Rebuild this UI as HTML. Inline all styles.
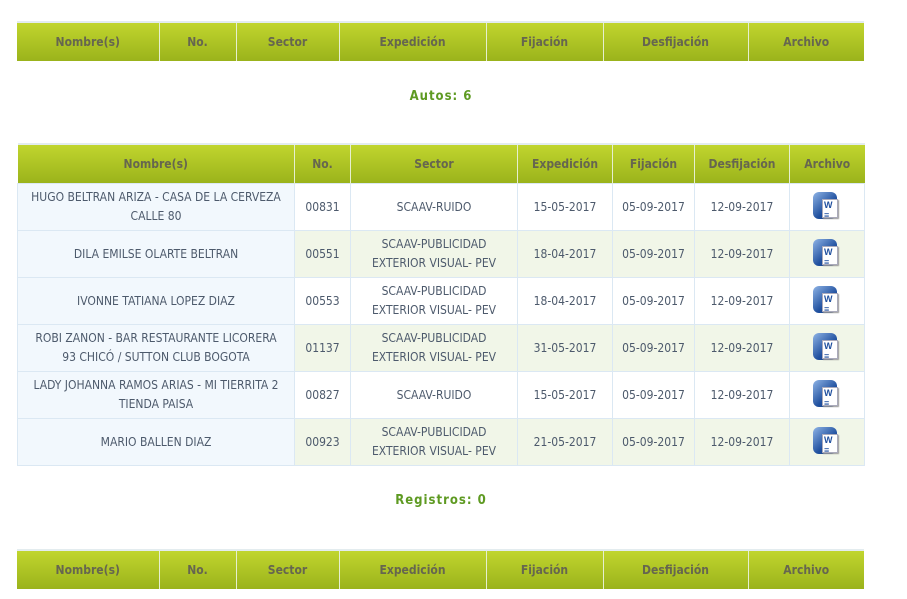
<!DOCTYPE html>
<html><head><meta charset="utf-8"><style>
body{margin:0;background:#fff;width:907px;height:599px;overflow:hidden;font-family:"DejaVu Sans Condensed","Liberation Sans",sans-serif;}
table{position:absolute;left:17px;width:847px;border-collapse:collapse;table-layout:fixed;}
th{height:38px;padding:0;background:linear-gradient(#c1d52e,#9bb31b);color:#66664f;font-size:12px;font-weight:bold;border-left:1px solid #e6efd0;border-top:2px solid #e3ecef;}
th:first-child{border-left:none}
td{height:46px;padding:0 4px;text-align:center;color:#4d5a6c;font-size:12px;line-height:19px;border:1px solid #dbe8f3;}
td.n{background:#f2f8fd;padding:0 4px}
tr.g td{background:#f1f6e8}
tr.g td.n{background:#f2f8fd}
.lbl{position:absolute;left:0;width:882px;text-align:center;color:#5e9a22;font-weight:bold;font-size:13px;letter-spacing:1px}
.w{display:inline-block;width:28px;height:30px;position:relative;vertical-align:middle}
.w .a{position:absolute;left:0;top:0;width:24px;height:27px;border-radius:6px;background:linear-gradient(135deg,#8fb4e6,#1f4f9e 60%,#173e80);}
.w .b{position:absolute;left:9px;top:7px;width:16px;height:19px;background:#fff;border:1px solid #aab;box-shadow:1px 1px 1px #999;font:bold 9px "Liberation Sans",sans-serif;color:#1f4f9e;line-height:10px;text-align:left;padding-left:1px;box-sizing:border-box}
</style></head><body>
<table style="top:21px"><colgroup><col style="width:142px"><col style="width:77px"><col style="width:103px"><col style="width:147px"><col style="width:117px"><col style="width:145px"><col style="width:116px"></colgroup>
<tr><th>Nombre(s)</th><th>No.</th><th>Sector</th><th>Expedición</th><th>Fijación</th><th>Desfijación</th><th>Archivo</th></tr></table>
<div class="lbl" style="top:89px">Autos: 6</div>
<table style="top:143px"><colgroup><col style="width:277px"><col style="width:56px"><col style="width:167px"><col style="width:95px"><col style="width:82px"><col style="width:95px"><col style="width:75px"></colgroup>
<tr><th>Nombre(s)</th><th>No.</th><th>Sector</th><th>Expedición</th><th>Fijación</th><th>Desfijación</th><th>Archivo</th></tr>
<tr><td class="n">HUGO BELTRAN ARIZA - CASA DE LA CERVEZA<br>CALLE 80</td><td>00831</td><td>SCAAV-RUIDO</td><td>15-05-2017</td><td>05-09-2017</td><td>12-09-2017</td><td><span class="w"><span class="a"></span><span class="b">W<br>≡</span></span></td></tr>
<tr class="g"><td class="n">DILA EMILSE OLARTE BELTRAN</td><td>00551</td><td>SCAAV-PUBLICIDAD EXTERIOR VISUAL- PEV</td><td>18-04-2017</td><td>05-09-2017</td><td>12-09-2017</td><td><span class="w"><span class="a"></span><span class="b">W<br>≡</span></span></td></tr>
<tr><td class="n">IVONNE TATIANA LOPEZ DIAZ</td><td>00553</td><td>SCAAV-PUBLICIDAD EXTERIOR VISUAL- PEV</td><td>18-04-2017</td><td>05-09-2017</td><td>12-09-2017</td><td><span class="w"><span class="a"></span><span class="b">W<br>≡</span></span></td></tr>
<tr class="g"><td class="n">ROBI ZANON - BAR RESTAURANTE LICORERA<br>93 CHICÓ / SUTTON CLUB BOGOTA</td><td>01137</td><td>SCAAV-PUBLICIDAD EXTERIOR VISUAL- PEV</td><td>31-05-2017</td><td>05-09-2017</td><td>12-09-2017</td><td><span class="w"><span class="a"></span><span class="b">W<br>≡</span></span></td></tr>
<tr><td class="n">LADY JOHANNA RAMOS ARIAS - MI TIERRITA 2<br>TIENDA PAISA</td><td>00827</td><td>SCAAV-RUIDO</td><td>15-05-2017</td><td>05-09-2017</td><td>12-09-2017</td><td><span class="w"><span class="a"></span><span class="b">W<br>≡</span></span></td></tr>
<tr class="g"><td class="n">MARIO BALLEN DIAZ</td><td>00923</td><td>SCAAV-PUBLICIDAD EXTERIOR VISUAL- PEV</td><td>21-05-2017</td><td>05-09-2017</td><td>12-09-2017</td><td><span class="w"><span class="a"></span><span class="b">W<br>≡</span></span></td></tr>
</table>
<div class="lbl" style="top:493px">Registros: 0</div>
<table style="top:549px"><colgroup><col style="width:142px"><col style="width:77px"><col style="width:103px"><col style="width:147px"><col style="width:117px"><col style="width:145px"><col style="width:116px"></colgroup>
<tr><th>Nombre(s)</th><th>No.</th><th>Sector</th><th>Expedición</th><th>Fijación</th><th>Desfijación</th><th>Archivo</th></tr></table>
</body></html>
